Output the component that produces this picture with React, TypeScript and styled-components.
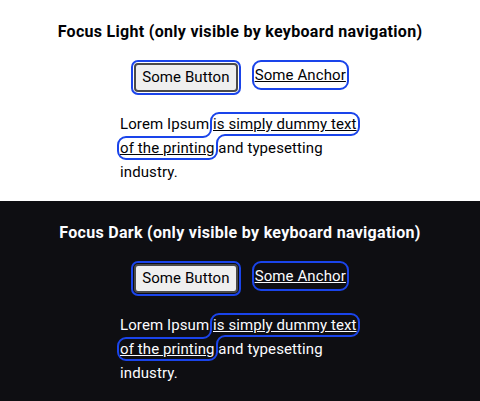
import React from "react";
import styled, { createGlobalStyle } from "styled-components";

const Global = createGlobalStyle`
  html, body { margin: 0; padding: 0; background: #ffffff; }
  body { font-family: Roboto, "Liberation Sans", Arial, sans-serif; }
`;

const Section = styled.section<{ $dark?: boolean }>`
  background: ${(p) => (p.$dark ? "#0e0e12" : "#ffffff")};
  color: ${(p) => (p.$dark ? "#fbfcff" : "#010205")};
  height: 201px;
  box-sizing: border-box;
  padding-top: 20px;
  display: flex;
  flex-direction: column;
  align-items: center;
`;

const Heading = styled.h2`
  margin: 0;
  font-size: 16px;
  line-height: 24px;
  font-weight: 700;
  text-align: center;
  letter-spacing: 0.3px;
`;

const Row = styled.div`
  display: flex;
  align-items: flex-start;
  gap: 17px;
  margin-top: 19px;
`;

const Button = styled.button`
  font-family: inherit;
  font-size: 15px;
  line-height: 21px;
  letter-spacing: 0.1px;
  color: #010205;
  background: #efefef;
  border: 2px solid #4a4a4a;
  border-radius: 4px;
  padding: 2px 6px;
  outline: 2px solid #1a44ea;
  outline-offset: 1px;
  cursor: pointer;
`;

const Anchor = styled.a`
  display: inline-block;
  font-size: 15px;
  line-height: 24px;
  letter-spacing: 0.1px;
  color: inherit;
  text-decoration: underline;
  outline: 2px solid #1a44ea;
  outline-offset: 1px;
  border-radius: 6px;
`;

const Paragraph = styled.p`
  margin: 20px 0 0;
  width: 240px;
  font-size: 15px;
  line-height: 24px;
  letter-spacing: 0.1px;
`;

const InlineLink = styled.a`
  color: inherit;
  text-decoration: underline;
  outline: 2px solid #1a44ea;
  outline-offset: 1px;
  border-radius: 6px;
`;

function Demo({ dark, title }: { dark?: boolean; title: string }) {
  return (
    <Section $dark={dark}>
      <Heading>{title}</Heading>
      <Row>
        <Button>Some Button</Button>
        <Anchor href="#">Some Anchor</Anchor>
      </Row>
      <Paragraph>
        Lorem Ipsum <InlineLink href="#">is simply dummy text of the printing</InlineLink> and
        typesetting industry.
      </Paragraph>
    </Section>
  );
}

export default function App() {
  return (
    <>
      <Global />
      <Demo title="Focus Light (only visible by keyboard navigation)" />
      <Demo dark title="Focus Dark (only visible by keyboard navigation)" />
    </>
  );
}
